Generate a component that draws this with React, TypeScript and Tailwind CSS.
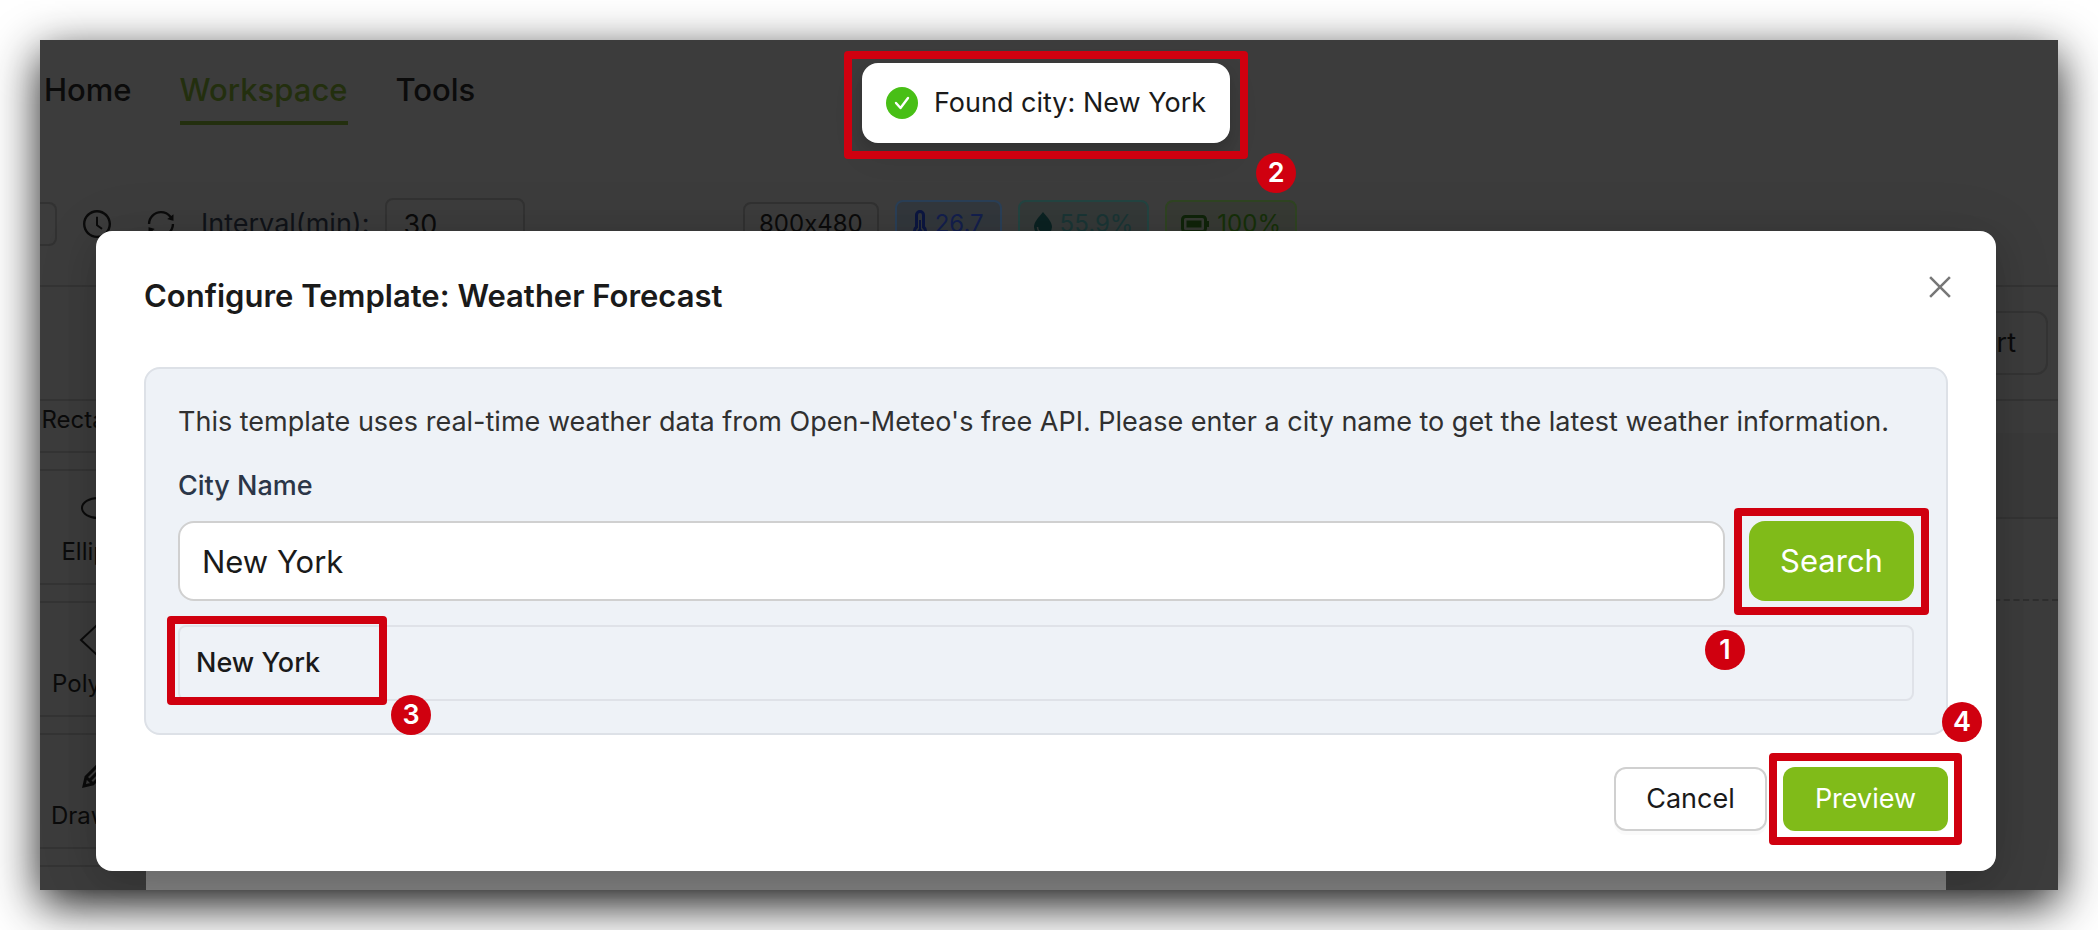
import React from "react";
import { AiOutlineClockCircle, AiOutlineSync, AiOutlineClose } from "react-icons/ai";

function Marker({ n, className }: { n: number; className: string }) {
  return (
    <span
      className={`absolute flex size-10 items-center justify-center rounded-full bg-[#d0000f] text-[27px] font-semibold leading-10 text-white ${className}`}
    >
      {n}
    </span>
  );
}

function Frame({ className }: { className: string }) {
  return <span aria-hidden="true" className={`pointer-events-none absolute rounded-sm border-8 border-[#d0000f] ${className}`} />;
}

const tools = [
  { label: "Rectangle", icon: <rect x="4" y="8" width="32" height="24" /> },
  { label: "Ellipse", icon: <ellipse cx="20" cy="20" rx="16" ry="10" /> },
  { label: "Polygon", icon: <path d="M3 20 20 4l17 16-17 16z" /> },
  {
    label: "Drawing",
    icon: <path strokeWidth="3" d="M6 34l2-9L27 6l7 7-19 19-9 2zM8 25l7 7M12 28l14-14" />,
  },
];

function Workspace() {
  return (
    <div className="absolute inset-0 flex flex-col overflow-hidden bg-[#3c3c3c] text-[#0b0b0b]">
      <nav className="flex h-[120px] shrink-0 items-start gap-12 pl-1 pt-6 text-[31px] font-medium leading-[52px]">
        <a href="#home">Home</a>
        <a href="#workspace" className="border-b-4 border-[#232f0e] pb-[5px] text-[#232f0e]">
          Workspace
        </a>
        <a href="#tools">Tools</a>
      </nav>
      <div className="flex h-[127px] shrink-0 items-start border-b-2 border-[#343434] pt-[38px]">
        <div className="flex h-[52px] w-[703px] shrink-0 items-center">
          <div className="h-11 w-[17px] rounded-r-lg border-2 border-l-0 border-[#323232]" />
          <AiOutlineClockCircle className="ml-6 size-8" />
          <AiOutlineSync className="ml-8 size-8" />
          <label htmlFor="interval" className="ml-6 text-[27px] leading-[48px] text-[#101318]">
            Interval(min):
          </label>
          <input
            id="interval"
            defaultValue="30"
            className="ml-4 h-[52px] w-[140px] rounded-lg border-2 border-[#323232] bg-transparent px-4 text-[27px]"
          />
        </div>
        <div className="flex h-[52px] items-center gap-4 text-2xl">
          <span className="flex h-11 items-center rounded-lg border-2 border-[#313131] px-[14px]">800x480</span>
          <span className="flex h-12 items-center gap-2 rounded-lg border-2 border-[#2a3f57] bg-[#32373c] px-4 text-[#141f4d]">
            <svg viewBox="0 0 14 32" className="h-8 w-[14px]" fill="none" stroke="#0c1640" strokeWidth="3">
              <path d="M3.500 7a3.500 3.500 0 0 1 7 0v12a5.500 5.500 0 1 1-7 0z" />
              <path strokeWidth="2" d="M7 12v12" />
              <circle cx="7" cy="23.500" r="1.500" strokeWidth="2" />
            </svg>
            26.7
          </span>
          <span className="flex h-12 items-center gap-2 rounded-lg border-2 border-[#234441] bg-[#343938] px-[14px] text-[#1a3535]">
            <svg viewBox="0 0 18 24" className="h-6 w-[18px]">
              <path fill="#0b2222" d="M9 0c5 6 9 10 9 15a9 9 0 0 1-18 0C0 10 4 6 9 0z" />
              <path fill="none" stroke="#343938" strokeWidth="1.500" d="M3.500 15c0 3 2 5 4.500 5.500" />
            </svg>
            55.9%
          </span>
          <span className="flex h-12 items-center gap-2 rounded-lg border-2 border-[#2f4422] bg-[#373a34] px-[14px] text-[#163009]">
            <svg viewBox="0 0 28 18" className="h-[18px] w-7" fill="none" stroke="#10240a" strokeWidth="3">
              <rect x="1.500" y="1.500" width="23" height="15" rx="3" />
              <path d="M26.500 6v6" />
              <path fill="#10240a" d="M7 7h12v4H7z" />
            </svg>
            100%
          </span>
        </div>
      </div>
      <div className="flex h-[114px] shrink-0 items-center justify-end border-b-2 border-[#343434] pr-[10px]">
        <button className="h-16 rounded-xl border-2 border-[#343434] px-[30px] text-[27px]">Export</button>
      </div>
      <div className="flex min-h-0 flex-1">
        <aside className="flex w-[106px] shrink-0 flex-col gap-4 overflow-hidden">
          {tools.map((t, i) => (
            <button
              key={t.label}
              className={`flex h-[116px] w-[116px] shrink-0 flex-col items-center justify-end gap-2 border-y-2 border-[#343434] pb-[15px] text-2xl leading-8 ${i === 0 ? "-mt-16" : ""}`}
            >
              <svg viewBox="0 0 40 40" className="size-10" fill="none" stroke="currentColor" strokeWidth="2">
                {t.icon}
              </svg>
              {t.label}
            </button>
          ))}
          <div className="h-[116px] w-[116px] shrink-0 border-t-2 border-[#343434]" />
        </aside>
        <div className="min-w-0 flex-1 bg-[#808080]" />
        <aside className="flex w-[112px] shrink-0 flex-col">
          <div className="h-[118px] border-b-2 border-[#343434] pt-8">
            <div className="h-full bg-[#3a3a3a]" />
          </div>
          <div className="h-[82px] border-b-2 border-dashed border-[#2f2f2f]" />
        </aside>
      </div>
    </div>
  );
}

function Toast() {
  return (
    <div className="absolute inset-x-0 top-[23px] flex justify-center pr-[6px]">
      <div
        role="status"
        className="relative flex h-20 items-center gap-4 rounded-2xl bg-white px-6 text-[27px] text-[#1a1a1a] shadow-[0_12px_32px_rgba(0,0,0,0.08),0_6px_12px_rgba(0,0,0,0.12)]"
      >
        <svg viewBox="0 0 32 32" className="size-8">
          <circle cx="16" cy="16" r="16" fill="#48bf16" />
          <path d="M10 16l4.500 5L22 11" fill="none" stroke="#fff" strokeWidth="2.400" strokeLinecap="round" strokeLinejoin="round" />
        </svg>
        Found city: New York
        <Frame className="-inset-x-[18px] -bottom-4 -top-3" />
        <Marker n={2} className="-bottom-[50px] -right-[66px]" />
      </div>
    </div>
  );
}

function TemplateDialog() {
  return (
    <section
      role="dialog"
      aria-labelledby="dialog-title"
      className="relative rounded-2xl bg-white px-12 pb-10 pt-10 text-[27px] text-[#1a1a1a] shadow-[0_12px_32px_rgba(0,0,0,0.12),0_6px_64px_rgba(0,0,0,0.1)]"
    >
      <header className="flex h-24 items-start justify-between">
        <h1 id="dialog-title" className="text-[31px] font-semibold leading-[50px]">
          Configure Template: Weather Forecast
        </h1>
        <button aria-label="Close" className="-mr-2 text-[#777]">
          <AiOutlineClose className="size-8" />
        </button>
      </header>
      <div className="rounded-2xl border-2 border-[#dde1e7] bg-[#eef2f7] px-8 pb-8 pt-7">
        <p className="leading-[50px] text-[#303030]">
          This template uses real-time weather data from Open-Meteo's free API. Please enter a city name to get the latest weather information.
        </p>
        <label htmlFor="city" className="mt-[14px] block font-medium leading-[50px] text-[#2b3648]">
          City Name
        </label>
        <div className="mt-[10px] flex gap-6">
          <input
            id="city"
            defaultValue="New York"
            className="h-20 min-w-0 flex-1 rounded-2xl border-2 border-[#d0d0d0] bg-white px-[22px] text-[31px]"
          />
          <button className="relative h-20 w-[165px] rounded-2xl bg-[#80bb19] text-[31px] text-white">
            Search
            <Frame className="-inset-x-[15px] -bottom-[14px] -top-[13px]" />
            <Marker n={1} className="-bottom-[69px] -left-11" />
          </button>
        </div>
        <div className="relative mt-6 flex h-[76px] items-center rounded-lg border-2 border-[#dfe2e8] px-4 font-medium">
          New York
          <Frame className="-bottom-[6px] -left-[13px] -top-[11px] w-[220px]" />
          <Marker n={3} className="-bottom-9 left-[211px]" />
        </div>
      </div>
      <footer className="mt-8 flex justify-end gap-4">
        <button className="h-16 w-[153px] rounded-xl border-2 border-[#d0d0d0] bg-white shadow-[0_4px_0_rgba(0,0,0,0.02)]">Cancel</button>
        <button className="relative h-16 w-[165px] rounded-xl bg-[#80bb19] text-white">
          Preview
          <Frame className="-inset-x-[14px] -inset-y-[14px]" />
          <Marker n={4} className="-right-[34px] -top-[65px]" />
        </button>
      </footer>
    </section>
  );
}

export default function App() {
  return (
    <div className="flex min-h-screen overflow-hidden bg-white p-10 font-[Inter,'Liberation_Sans',sans-serif] [font-feature-settings:'calt'_0]">
      <main className="relative flex-1 pb-[19px] pl-14 pr-[62px] pt-[191px] shadow-[0_14px_44px_rgba(0,0,0,0.9)]">
        <Workspace />
        <TemplateDialog />
        <Toast />
      </main>
    </div>
  );
}
